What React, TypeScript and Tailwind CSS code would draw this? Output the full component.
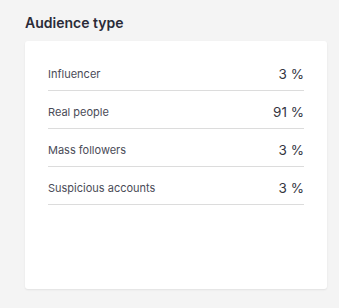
const rows = [
  { label: 'Influencer', value: '3 %' },
  { label: 'Real people', value: '91 %' },
  { label: 'Mass followers', value: '3 %' },
  { label: 'Suspicious accounts', value: '3 %' },
];

export default function App() {
  return (
    <div className="w-[339px] h-[308px] bg-[#f4f4f4] pt-[13px] pl-[25px] pr-[12px] font-['Inter',sans-serif]">
      <h2 className="text-[14px] leading-[20px] font-semibold text-[#2a2b38]">Audience type</h2>
      <div className="mt-[8px] h-[248px] w-[302px] bg-white rounded-[3px] shadow-[0_1px_2px_rgba(0,0,0,0.08)] px-[23px] pt-[12px]">
        {rows.map((r) => (
          <div
            key={r.label}
            className="flex items-center justify-between border-b border-[#dcdcdc] pt-[12px] pb-[7px]"
          >
            <span className="text-[11px] leading-[18px] text-[#4a4b57]">{r.label}</span>
            <span className="text-[13.5px] leading-[18px] text-[#35363f]">{r.value}</span>
          </div>
        ))}
      </div>
    </div>
  );
}
